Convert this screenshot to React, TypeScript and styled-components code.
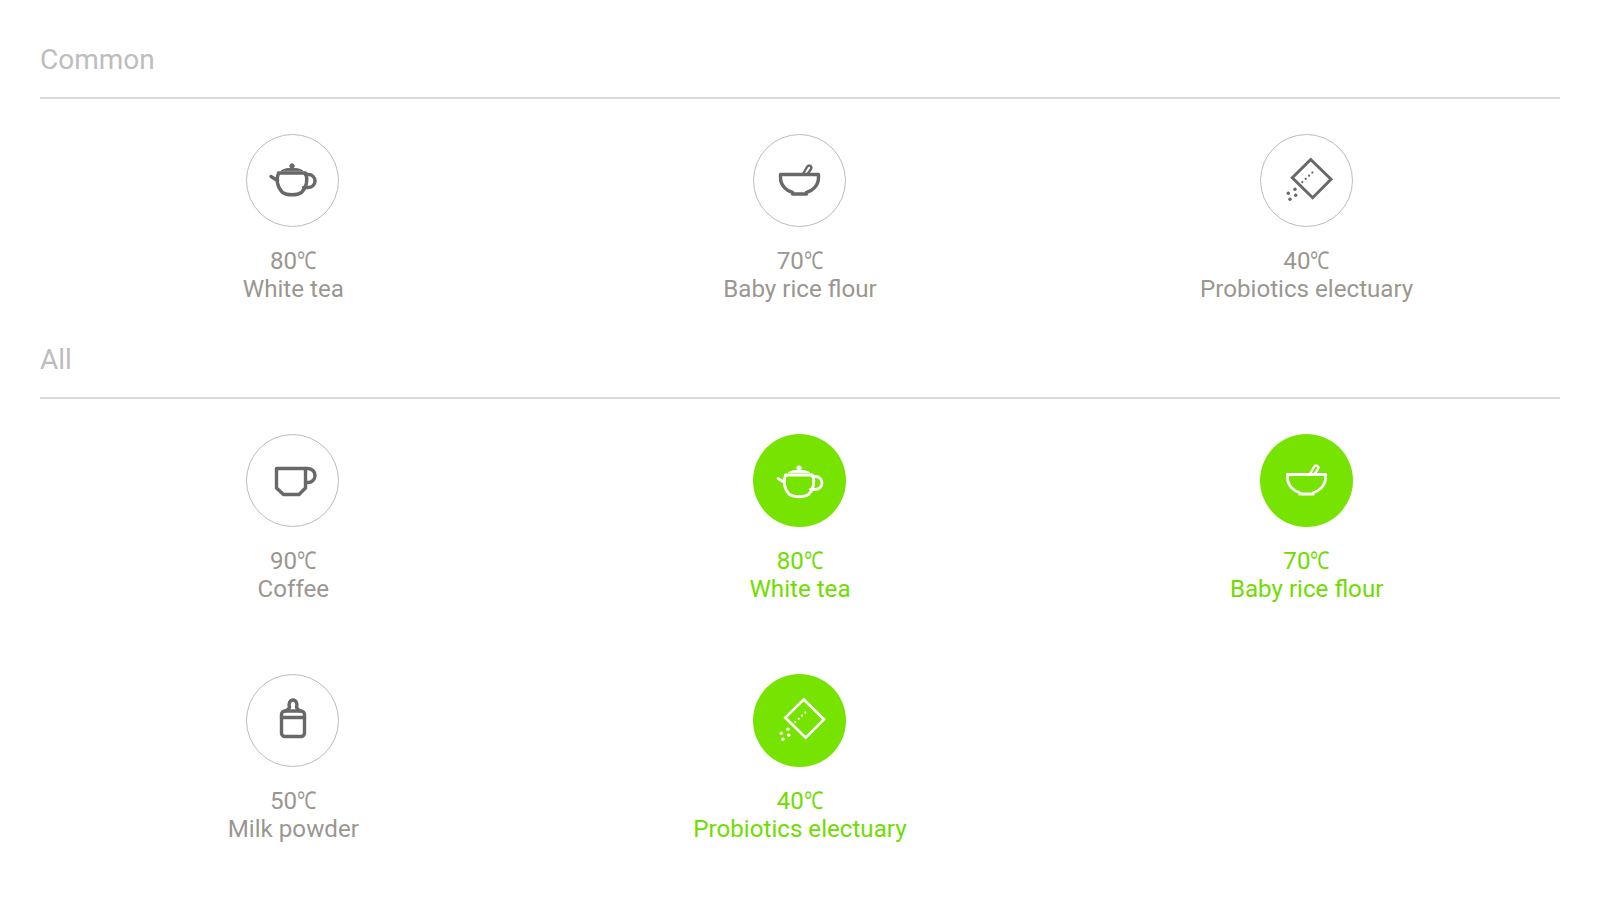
import React from "react";
import styled, { createGlobalStyle } from "styled-components";

const Global = createGlobalStyle`
  html, body { margin: 0; padding: 0; background: #fff; }
  body { font-family: Roboto, "Noto Sans", sans-serif; }
`;

const Page = styled.main`
  width: 1600px;
  height: 909px;
  padding: 41px 40px 0;
  box-sizing: border-box;
  overflow: hidden;
`;

const Section = styled.section`
  margin-bottom: 38px;
`;

const Heading = styled.h2`
  margin: 0 0 35px;
  height: 58px;
  line-height: 38px;
  box-sizing: border-box;
  border-bottom: 2px solid #dadada;
  font-size: 28px;
  font-weight: 400;
  color: #bdbdbd;
`;

const Grid = styled.div`
  display: grid;
  grid-template-columns: repeat(3, 1fr);
  row-gap: 71px;
`;

const Item = styled.div<{ $active?: boolean }>`
  display: flex;
  flex-direction: column;
  align-items: center;
  color: ${(p) => (p.$active ? "#70dc00" : "#9a9790")};
  font-size: 24.15px;
  line-height: 28px;
`;

const Badge = styled.div<{ $active?: boolean }>`
  width: 93px;
  height: 93px;
  box-sizing: border-box;
  border-radius: 50%;
  margin: 0 1px 20px 0;
  display: flex;
  align-items: center;
  justify-content: center;
  background: ${(p) => (p.$active ? "#76e300" : "#fff")};
  border: ${(p) => (p.$active ? "none" : "1.5px solid #bcbcbc")};
  color: ${(p) => (p.$active ? "#fff" : "#686868")};
`;

const Art = styled.svg`
  width: 56px;
  height: 56px;
  display: block;
  fill: none;
  stroke: currentColor;
  stroke-linecap: round;
  stroke-linejoin: round;
`;

const Temp = styled.div`
  white-space: nowrap;
`;

const Degree = styled.span`
  display: inline-block;
  transform: scaleX(0.8);
  transform-origin: left center;
  margin-right: -4.5px;
`;

type Kind = "tea" | "bowl" | "sachet" | "cup" | "bottle";

const Icon = ({ kind, active }: { kind: Kind; active?: boolean }) => {
  const sw = active ? 2.8 : 3.4;
  const view = "-28 -28 56 56";
  if (kind === "tea")
    return (
      <Art viewBox={view} strokeWidth={sw}>
        <g transform={active ? "translate(0 2)" : "translate(-1 0)"}>
          <path d="M-13.500-8H13.500C16-2 15 6 9.500 11.500 5 14.500-5 14.500-9.500 11.500-15 6-16-2-13.500-8Z" />
          <path d="M-14.500-.5-21-4.500" />
          <path d="M13.500-6.500H16.500A6.300 6.300 0 0 1 16.500 6.500H11.500" />
          <path d="M-10.500-10.500C-6-13.500 6-13.500 10.500-10.500Z" fill="currentColor" strokeWidth={1} />
          <circle cx="0" cy="-15" r="2.200" fill="currentColor" strokeWidth={1} />
        </g>
      </Art>
    );
  if (kind === "bowl")
    return (
      <Art viewBox={view} strokeWidth={sw}>
        <path d="M-18.500-6.500H19.500V-3.500C19.500 5 13 10 7.500 11.500V13H-6.500V11.500C-12 10-18.500 5-18.500-3.500Z" />
        <path d="M4-7 8-14C9.500-17 13.500-15 12-12L8.500-7" strokeWidth={2.4} />
      </Art>
    );
  if (kind === "sachet")
    return (
      <Art viewBox={view} strokeWidth={active ? 2.6 : 3}>
        <path d="M4.700-21.500 25-1.700 6.700 16.700-13.700-3.300Z" strokeLinejoin="miter" />
        <path d="M-3.700 1 9-11" strokeWidth={2.2} strokeDasharray="0.1 4.500" />
        <g fill="currentColor" stroke="none">
          <circle cx="-11" cy="8.300" r="1.700" />
          <circle cx="-17.700" cy="12.300" r="1.700" />
          <circle cx="-10.300" cy="14.300" r="1.700" />
          <circle cx="-16" cy="18.300" r="1.700" />
        </g>
      </Art>
    );
  if (kind === "cup")
    return (
      <Art viewBox={view} strokeWidth={sw}>
        <path d="M-16.500-12.500H12.500V7L6 13.500H-9.500L-16.500 7Z" />
        <path d="M12.500-12.500H15A7 7 0 0 1 15 1.500H12.500" />
      </Art>
    );
  return (
    <Art viewBox={view} strokeWidth={sw}>
      <rect x="-11.500" y="-10" width="23" height="25.500" rx="3.500" />
      <path d="M-11.500-3.500H11.500" />
      <path d="M-7.500-10C-5-11-3.500-12.500-3.500-14.500-4.500-16.500-3.500-21 0-21 3.500-21 4.500-16.500 3.500-14.500 3.500-12.500 5-11 7.500-10" />
    </Art>
  );
};

type Entry = { kind: Kind; temp: string; name: string; active?: boolean };

const common: Entry[] = [
  { kind: "tea", temp: "80", name: "White tea" },
  { kind: "bowl", temp: "70", name: "Baby rice flour" },
  { kind: "sachet", temp: "40", name: "Probiotics electuary" },
];

const all: Entry[] = [
  { kind: "cup", temp: "90", name: "Coffee" },
  { kind: "tea", temp: "80", name: "White tea", active: true },
  { kind: "bowl", temp: "70", name: "Baby rice flour", active: true },
  { kind: "bottle", temp: "50", name: "Milk powder" },
  { kind: "sachet", temp: "40", name: "Probiotics electuary", active: true },
];

const Cards = ({ items }: { items: Entry[] }) => (
  <Grid>
    {items.map((e) => (
      <Item key={e.kind + e.temp} $active={e.active}>
        <Badge $active={e.active}>
          <Icon kind={e.kind} active={e.active} />
        </Badge>
        <Temp>
          {e.temp}
          <Degree>℃</Degree>
        </Temp>
        <div>{e.name}</div>
      </Item>
    ))}
  </Grid>
);

export default function App() {
  return (
    <Page>
      <Global />
      <Section>
        <Heading>Common</Heading>
        <Cards items={common} />
      </Section>
      <Section>
        <Heading>All</Heading>
        <Cards items={all} />
      </Section>
    </Page>
  );
}
